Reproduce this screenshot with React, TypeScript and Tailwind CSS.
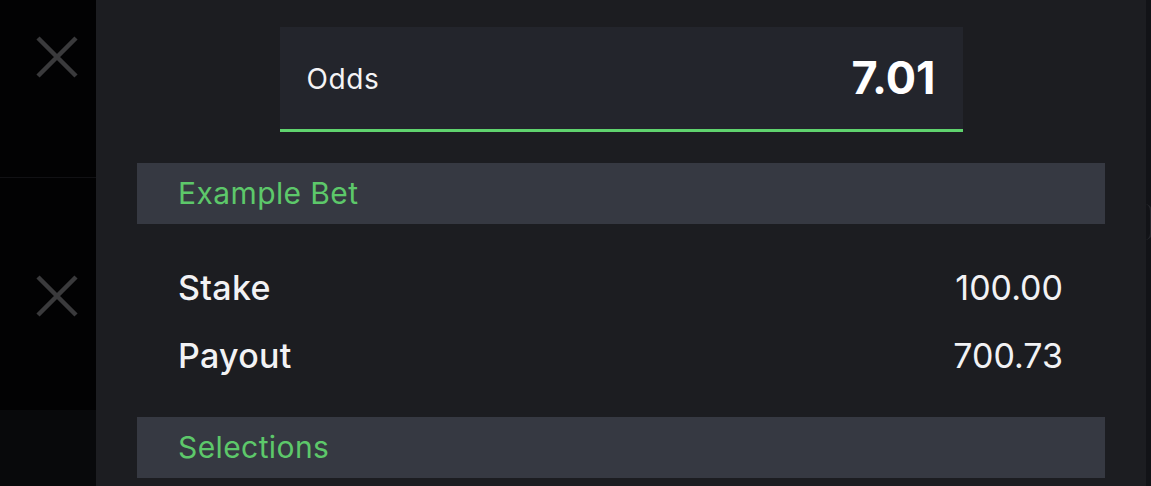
import React from 'react';

const font = { fontFamily: 'Inter, "Noto Sans", sans-serif' };

const CloseIcon: React.FC = () => (
  <svg width="44" height="44" viewBox="0 0 44 44" fill="none">
    <path d="M3 3 L41 41 M41 3 L3 41" stroke="#3a3a3c" strokeWidth="4.5" />
  </svg>
);

const SectionHeader: React.FC<{ title: string }> = ({ title }) => (
  <div className="h-[61px] bg-[#363942] flex items-center pl-[41px]">
    <span className="text-[30px] text-[#5dc86a] tracking-[0.4px]">{title}</span>
  </div>
);

const Row: React.FC<{ label: string; value: string }> = ({ label, value }) => (
  <div className="h-[68px] flex items-center justify-between pl-[82px] pr-[83px]">
    <span className="text-[34px] font-medium text-[#f2f2f4] tracking-[0.3px]">{label}</span>
    <span className="text-[34px] text-[#f2f2f4]">{value}</span>
  </div>
);

export default function App() {
  return (
    <div className="w-[1151px] h-[486px] flex overflow-hidden bg-[#121317]" style={font}>
      {/* left list behind the sheet */}
      <div className="w-[96px] flex flex-col bg-[#020203]">
        <div className="h-[178px] pt-[35px] pl-[35px] border-b border-[#111114]">
          <CloseIcon />
        </div>
        <div className="h-[232px] pt-[96px] pl-[35px]">
          <CloseIcon />
        </div>
        <div className="flex-1 bg-[#08090b]" />
      </div>

      {/* bet sheet */}
      <div className="w-[1050px] bg-[#1c1d21] flex flex-col">
        <div className="mt-[27px] mx-auto w-[683px] h-[105px] bg-[#23252c] border-b-[3px] border-[#5fd36e] flex items-center justify-between pl-[27px] pr-[27px]">
          <span className="text-[28px] text-[#f4f4f6] tracking-[0.6px] pt-[1px]">Odds</span>
          <span className="text-[45px] font-bold text-white">7.01</span>
        </div>

        <div className="mt-[31px] px-[41px]">
          <SectionHeader title="Example Bet" />
        </div>

        <div className="pt-[29px] pb-[28px]">
          <Row label="Stake" value="100.00" />
          <Row label="Payout" value="700.73" />
        </div>

        <div className="px-[41px]">
          <SectionHeader title="Selections" />
        </div>
      </div>

      <div className="flex-1 relative">
        <div className="absolute left-[-8px] top-[204px] w-[14px] h-[36px] rounded-full border-r-2 border-[#26272c]" />
      </div>
    </div>
  );
}
